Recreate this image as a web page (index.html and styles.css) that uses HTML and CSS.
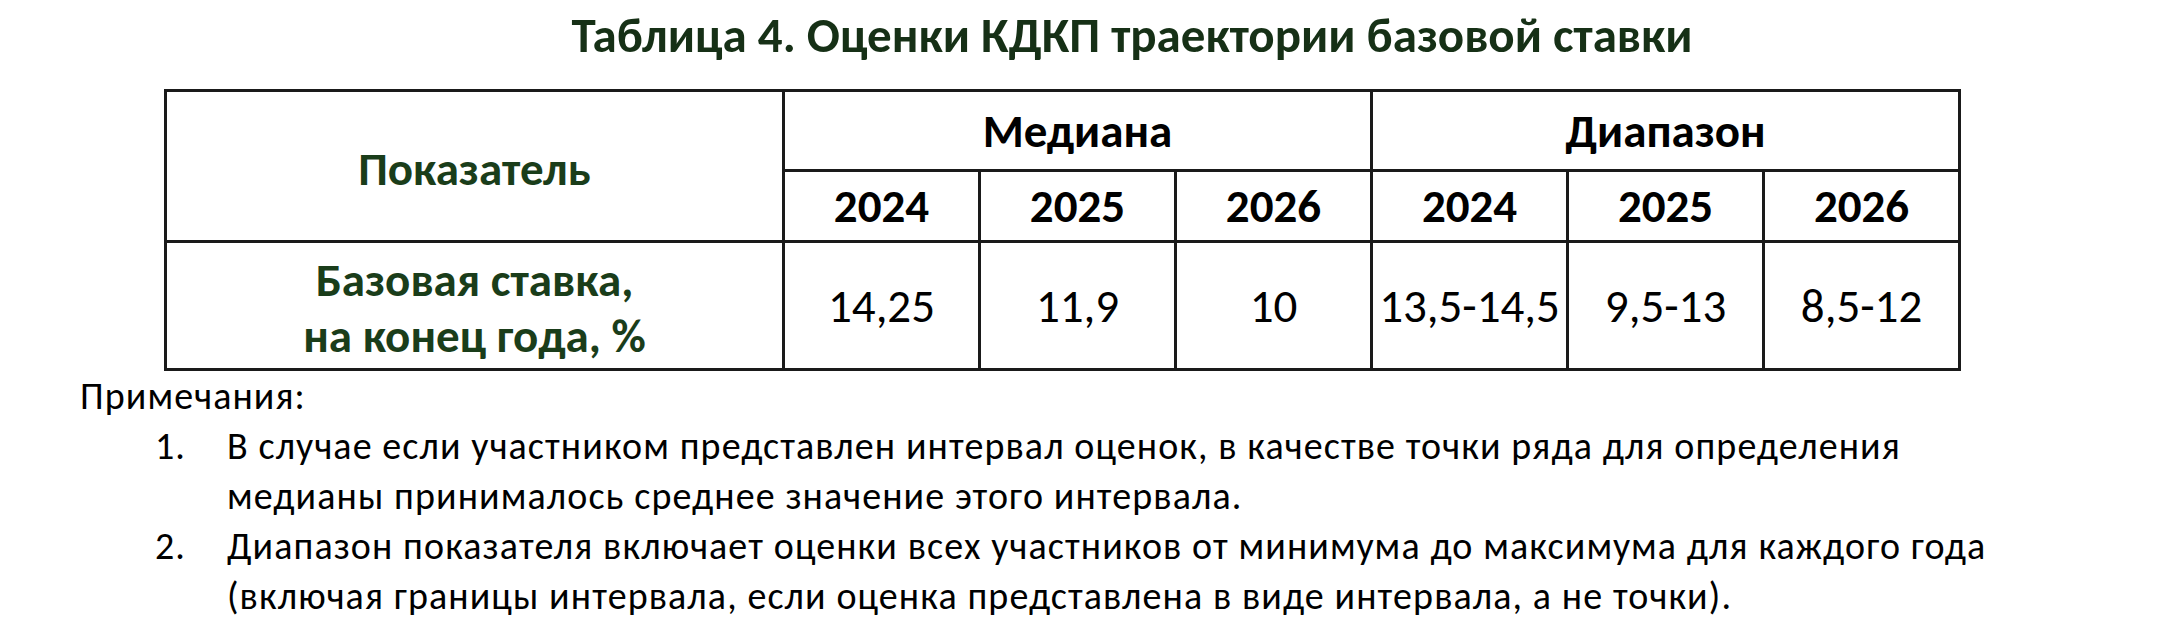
FILE: index.html
```html
<!DOCTYPE html>
<html lang="ru">
<head>
<meta charset="utf-8">
<link rel="stylesheet" href="styles.css">
</head>
<body>
<div class="page">
  <h1 class="title">Таблица 4. Оценки КДКП траектории базовой ставки</h1>
  <table class="rates">
    <colgroup>
      <col class="c-name">
      <col class="c-year" span="6">
    </colgroup>
    <tr class="r-group">
      <th rowspan="2" class="name">Показатель</th>
      <th colspan="3">Медиана</th>
      <th colspan="3">Диапазон</th>
    </tr>
    <tr class="r-years">
      <th>2024</th><th>2025</th><th>2026</th>
      <th>2024</th><th>2025</th><th>2026</th>
    </tr>
    <tr class="r-data">
      <th class="name">Базовая ставка,<br>на конец года, %</th>
      <td>14,25</td><td>11,9</td><td>10</td>
      <td>13,5-14,5</td><td>9,5-13</td><td>8,5-12</td>
    </tr>
  </table>
  <div class="notes">
    <p class="notes-head">Примечания:</p>
    <ol class="notes-list">
      <li class="note"><span class="num">1.</span><span class="txt">В случае если участником представлен интервал оценок, в качестве точки ряда для определения<br>медианы принималось среднее значение этого интервала.</span></li>
      <li class="note"><span class="num">2.</span><span class="txt">Диапазон показателя включает оценки всех участников от минимума до максимума для каждого года<br>(включая границы интервала, если оценка представлена в виде интервала, а не точки).</span></li>
    </ol>
  </div>
</div>
</body>
</html>
```
FILE: styles.css
```css
html, body {
  margin: 0;
  padding: 0;
  background: #ffffff;
}
.page {
  width: 2160px;
  font-family: Carlito, Lato, "Liberation Sans", sans-serif;
  color: #000;
}
.title {
  margin: 0;
  padding: 0 0 0 104px;
  height: 89px;
  line-height: 70px;
  font-size: 49px;
  font-weight: bold;
  text-align: center;
  color: #163016;
}
.rates {
  margin-left: 164px;
  border-collapse: collapse;
  table-layout: fixed;
  width: 1797px;
}
.c-name { width: 618px; }
.c-year { width: 196px; }
.rates th, .rates td {
  border: 3px solid #1a1a1a;
  padding: 0;
  text-align: center;
  vertical-align: middle;
  font-size: 47px;
}
.rates th { font-weight: bold; }
.rates td { font-weight: normal; }
.rates .name { color: #1a3d1a; }
.r-group { height: 80px; }
.r-group .name { padding-top: 6px; }
.r-years { height: 71px; }
.r-data { height: 128px; }
.r-data .name { line-height: 56px; padding-top: 4px; }
.notes {
  margin-left: 80px;
  font-size: 38px;
  letter-spacing: 1.1px;
  line-height: 50px;
}
.notes-head { margin: 0; }
.notes-list {
  list-style: none;
  margin: 0;
  padding: 0 0 0 75px;
}
.note {
  display: flex;
}
.num { width: 72px; flex: none; }
```
